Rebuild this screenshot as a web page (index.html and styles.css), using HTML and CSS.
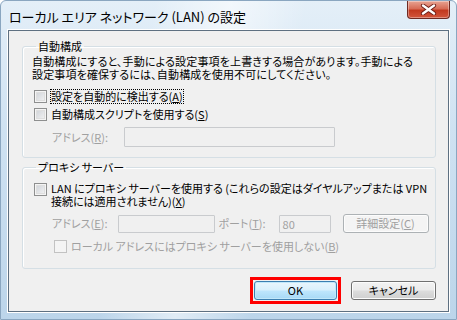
FILE: index.html
```html
<!DOCTYPE html>
<html lang="ja">
<head>
    <meta charset="UTF-8">
    <link rel="stylesheet" href="styles.css">
    <title>ローカル エリア ネットワーク (LAN) の設定</title>
</head>
<body>
    <div class="window">
        <div class="titlebar">
            <span class="title">ローカル エリア ネットワーク (LAN) の設定</span>
            <button class="close-button">
                <svg width="17" height="11" viewBox="0 0 17 11">
                    <path d="M3 1.5 L14 9.5 M14 1.5 L3 9.5" stroke="#6b1c14" stroke-width="4.2" stroke-linecap="round"/>
                    <path d="M3 1.5 L14 9.5 M14 1.5 L3 9.5" stroke="#ffffff" stroke-width="2.4" stroke-linecap="round"/>
                </svg>
            </button>
        </div>
        <div class="client">
            <fieldset class="group group-auto">
                <legend>自動構成</legend>
                <p class="desc">自動構成にすると、手動による設定事項を上書きする場合があります。手動による<br>設定事項を確保するには、自動構成を使用不可にしてください。</p>
                <div class="check-row first">
                    <span class="box"></span>
                    <span class="check-text focused">設定を自動的に検出する(<u>A</u>)</span>
                </div>
                <div class="check-row">
                    <span class="box"></span>
                    <span class="check-text">自動構成スクリプトを使用する(<u>S</u>)</span>
                </div>
                <div class="field-row row-r disabled">
                    <span class="field-label">アドレス(<u>R</u>):</span>
                    <span class="textbox box-r"></span>
                </div>
            </fieldset>

            <fieldset class="group group-proxy">
                <legend>プロキシ サーバー</legend>
                <div class="check-row multi">
                    <span class="box"></span>
                    <span class="check-text">LAN にプロキシ サーバーを使用する (これらの設定はダイヤルアップまたは VPN<br>接続には適用されません)(<u>X</u>)</span>
                </div>
                <div class="field-row row-e disabled">
                    <span class="field-label">アドレス(<u>E</u>):</span>
                    <span class="textbox box-e"></span>
                    <span class="field-label port-label">ポート(<u>T</u>):</span>
                    <span class="textbox box-port">80</span>
                    <span class="push-button advanced">詳細設定(<u>C</u>)</span>
                </div>
                <div class="check-row local disabled">
                    <span class="box"></span>
                    <span class="check-text">ローカル アドレスにはプロキシ サーバーを使用しない(<u>B</u>)</span>
                </div>
            </fieldset>

            <div class="footer">
                <span class="highlight">
                    <span class="push-button ok">OK</span>
                </span>
                <span class="push-button cancel">キャンセル</span>
            </div>
        </div>
    </div>
</body>
</html>
```

FILE: styles.css
```css
html, body {
    margin: 0;
    padding: 0;
    width: 457px;
    height: 320px;
    overflow: hidden;
    background: #ffffff;
}

.window {
    box-sizing: border-box;
    width: 457px;
    height: 320px;
    display: flex;
    flex-direction: column;
    padding: 0 7px 7px 7px;
    border: 1px solid #8aa6c0;
    border-radius: 6px 6px 0 0;
    background:
        linear-gradient(100deg, rgba(255,255,255,0) 30%, rgba(255,255,255,0.55) 45%, rgba(255,255,255,0) 60%),
        linear-gradient(180deg, #e4eff8 0%, #cfe2f2 40%, #bcd5ea 100%);
    font-family: "Noto Sans CJK JP", "Noto Sans", sans-serif;
    font-feature-settings: "palt";
    color: #000;
    white-space: nowrap;
}

.titlebar {
    height: 29px;
    display: flex;
    justify-content: space-between;
    align-items: flex-start;
}

.title {
    font-size: 13px;
    line-height: 15px;
    margin-top: 8px;
    margin-left: 1px;
    color: #000;
}

.close-button {
    width: 43px;
    height: 18px;
    margin-top: 0;
    margin-right: -1px;
    padding: 0;
    border: 1px solid #6e2a22;
    border-top: none;
    border-radius: 0 0 4px 4px;
    background: linear-gradient(180deg, #e8a493 0%, #d76c56 45%, #c2391f 55%, #d2553b 100%);
    display: flex;
    align-items: center;
    justify-content: center;
    box-shadow: inset 0 0 0 1px rgba(255,255,255,0.35);
}

.close-button svg {
    display: block;
}

.client {
    flex: 1;
    display: flex;
    flex-direction: column;
    padding: 9px 12px 0 13px;
    background: #f0f0f0;
    border: 1px solid #5e7081;
    box-shadow: 0 0 0 1px #ffffff;
    font-size: 11px;
    line-height: 13px;
}

.group {
    margin: 0;
    padding: 0 0 0 9px;
    border: 1px solid #d5dfe5;
    border-radius: 3px;
    box-shadow: inset 1px 1px 0 #ffffff;
}

.group legend {
    padding: 0 2px;
    margin-left: 4px;
    line-height: 13px;
}

.group-auto {
    height: 116px;
}

.group-proxy {
    margin-top: 3px;
    height: 106px;
}

.desc {
    margin: 2px 0 0 0;
    line-height: 13px;
    letter-spacing: 0.15px;
}

.check-row {
    display: flex;
    align-items: center;
    height: 18px;
    margin-left: 2px;
}

.check-row.first {
    margin-top: 6px;
}

.check-row.multi {
    align-items: flex-start;
    height: auto;
    margin-top: 8px;
}

.check-row.multi .box {
    margin-top: 1px;
}

.check-row.local {
    margin-left: 22px;
    margin-top: 4px;
}

.box {
    box-sizing: border-box;
    width: 13px;
    height: 13px;
    flex: none;
    border: 1px solid #8e8f8f;
    background: linear-gradient(135deg, #cbcfd5 0%, #f6f6f6 100%);
    box-shadow: inset 0 0 0 1px #f4f4f4, inset 0 0 0 2px #dedede;
    margin-right: 3px;
}

.check-text {
    padding: 0 1px;
}

.check-text.focused {
    padding: 1px 1px;
    outline: 1px dotted #000;
    outline-offset: -1px;
}

.disabled {
    color: #a0a0a0;
}

.disabled .box {
    border-color: #c2c2c2;
    background: #f4f4f4;
    box-shadow: none;
}

.field-row {
    display: flex;
    align-items: center;
    margin-left: 20px;
}

.field-label {
    flex: none;
}

.row-r {
    margin-top: 4px;
}

.row-e {
    margin-top: 6px;
}

.textbox {
    box-sizing: border-box;
    display: block;
    flex: none;
    border: 1px solid #c9cbce;
    border-radius: 1px;
    background: #f0f0f0;
    color: #a0a0a0;
    padding: 2px 3px;
}

.box-r {
    width: 211px;
    height: 20px;
    margin-left: 16px;
}

.box-e {
    width: 97px;
    height: 18px;
    margin-left: 10px;
}

.port-label {
    margin-left: 4px;
}

.box-port {
    width: 52px;
    height: 18px;
    margin-left: 13px;
    line-height: 12px;
}

.push-button {
    box-sizing: border-box;
    display: flex;
    align-items: center;
    justify-content: center;
    flex: none;
    height: 19px;
    border: 1px solid #707070;
    border-radius: 3px;
    background: linear-gradient(180deg, #f2f2f2 0%, #ebebeb 48%, #dddddd 52%, #cfcfcf 100%);
    box-shadow: inset 0 0 0 1px #fcfcfc;
    color: #000;
}

.push-button.advanced {
    width: 86px;
    margin-left: 12px;
    border-color: #adb2b5;
    background: #f4f4f4;
    color: #a0a0a0;
}

.footer {
    display: flex;
    justify-content: flex-end;
    align-items: center;
    margin-top: 8px;
}

.highlight {
    display: block;
    border: 3px solid #ff0000;
    padding: 1px;
}

.push-button.ok {
    width: 83px;
    border-color: #3c7fb1;
    background: linear-gradient(180deg, #eaf6fd 0%, #d9f0fc 48%, #bee6fd 52%, #a7d9f5 100%);
    box-shadow: inset 0 0 0 1px #c2e8fa;
}

.push-button.cancel {
    width: 85px;
    margin-left: 10px;
}
```
